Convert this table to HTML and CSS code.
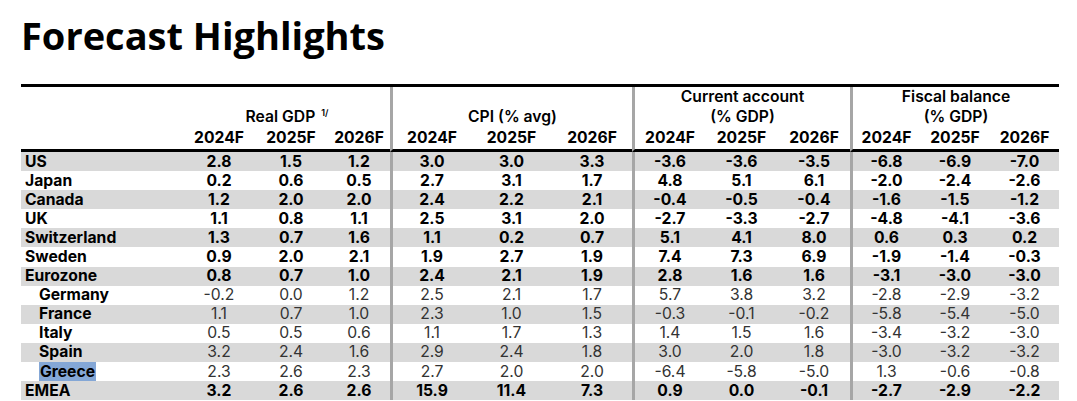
FILE: index.html
```html
<!DOCTYPE html>
<html lang="en">
<head>
<meta charset="utf-8">
<title>Forecast Highlights</title>
<link rel="stylesheet" href="styles.css">
</head>
<body>
<div class="page">
  <h1 class="title">Forecast Highlights</h1>
  <table class="fc">
    <colgroup>
      <col class="c-label">
      <col class="c-g1"><col class="c-g2"><col class="c-g3">
      <col class="c-c"><col class="c-c"><col class="c-c2">
      <col class="c-a"><col class="c-a"><col class="c-a2">
      <col class="c-f"><col class="c-f"><col class="c-f2">
    </colgroup>
    <thead>
      <tr class="h1">
        <th></th>
        <th colspan="3"></th>
        <th colspan="3" class="g"></th>
        <th colspan="3" class="g">Current account</th>
        <th colspan="3" class="g">Fiscal balance</th>
      </tr>
      <tr class="h2">
        <th></th>
        <th colspan="3">Real GDP <sup>1/</sup></th>
        <th colspan="3" class="g">CPI (% avg)</th>
        <th colspan="3" class="g">(% GDP)</th>
        <th colspan="3" class="g">(% GDP)</th>
      </tr>
      <tr class="h3">
        <th></th>
        <th>2024F</th><th>2025F</th><th>2026F</th>
        <th class="g">2024F</th><th>2025F</th><th>2026F</th>
        <th class="g">2024F</th><th>2025F</th><th>2026F</th>
        <th class="g">2024F</th><th>2025F</th><th>2026F</th>
      </tr>
    </thead>
    <tbody>
      <tr class="alt"><td class="lb">US</td><td>2.8</td><td>1.5</td><td>1.2</td><td class="g">3.0</td><td>3.0</td><td>3.3</td><td class="g">-3.6</td><td>-3.6</td><td>-3.5</td><td class="g">-6.8</td><td>-6.9</td><td>-7.0</td></tr>
      <tr><td class="lb">Japan</td><td>0.2</td><td>0.6</td><td>0.5</td><td class="g">2.7</td><td>3.1</td><td>1.7</td><td class="g">4.8</td><td>5.1</td><td>6.1</td><td class="g">-2.0</td><td>-2.4</td><td>-2.6</td></tr>
      <tr class="alt"><td class="lb">Canada</td><td>1.2</td><td>2.0</td><td>2.0</td><td class="g">2.4</td><td>2.2</td><td>2.1</td><td class="g">-0.4</td><td>-0.5</td><td>-0.4</td><td class="g">-1.6</td><td>-1.5</td><td>-1.2</td></tr>
      <tr><td class="lb">UK</td><td>1.1</td><td>0.8</td><td>1.1</td><td class="g">2.5</td><td>3.1</td><td>2.0</td><td class="g">-2.7</td><td>-3.3</td><td>-2.7</td><td class="g">-4.8</td><td>-4.1</td><td>-3.6</td></tr>
      <tr class="alt"><td class="lb">Switzerland</td><td>1.3</td><td>0.7</td><td>1.6</td><td class="g">1.1</td><td>0.2</td><td>0.7</td><td class="g">5.1</td><td>4.1</td><td>8.0</td><td class="g">0.6</td><td>0.3</td><td>0.2</td></tr>
      <tr><td class="lb">Sweden</td><td>0.9</td><td>2.0</td><td>2.1</td><td class="g">1.9</td><td>2.7</td><td>1.9</td><td class="g">7.4</td><td>7.3</td><td>6.9</td><td class="g">-1.9</td><td>-1.4</td><td>-0.3</td></tr>
      <tr class="alt"><td class="lb">Eurozone</td><td>0.8</td><td>0.7</td><td>1.0</td><td class="g">2.4</td><td>2.1</td><td>1.9</td><td class="g">2.8</td><td>1.6</td><td>1.6</td><td class="g">-3.1</td><td>-3.0</td><td>-3.0</td></tr>
      <tr class="sub"><td class="lb">Germany</td><td>-0.2</td><td>0.0</td><td>1.2</td><td class="g">2.5</td><td>2.1</td><td>1.7</td><td class="g">5.7</td><td>3.8</td><td>3.2</td><td class="g">-2.8</td><td>-2.9</td><td>-3.2</td></tr>
      <tr class="sub alt"><td class="lb">France</td><td>1.1</td><td>0.7</td><td>1.0</td><td class="g">2.3</td><td>1.0</td><td>1.5</td><td class="g">-0.3</td><td>-0.1</td><td>-0.2</td><td class="g">-5.8</td><td>-5.4</td><td>-5.0</td></tr>
      <tr class="sub"><td class="lb">Italy</td><td>0.5</td><td>0.5</td><td>0.6</td><td class="g">1.1</td><td>1.7</td><td>1.3</td><td class="g">1.4</td><td>1.5</td><td>1.6</td><td class="g">-3.4</td><td>-3.2</td><td>-3.0</td></tr>
      <tr class="sub alt"><td class="lb">Spain</td><td>3.2</td><td>2.4</td><td>1.6</td><td class="g">2.9</td><td>2.4</td><td>1.8</td><td class="g">3.0</td><td>2.0</td><td>1.8</td><td class="g">-3.0</td><td>-3.2</td><td>-3.2</td></tr>
      <tr class="sub"><td class="lb"><span class="sel">Greece</span></td><td>2.3</td><td>2.6</td><td>2.3</td><td class="g">2.7</td><td>2.0</td><td>2.0</td><td class="g">-6.4</td><td>-5.8</td><td>-5.0</td><td class="g">1.3</td><td>-0.6</td><td>-0.8</td></tr>
      <tr class="alt"><td class="lb">EMEA</td><td>3.2</td><td>2.6</td><td>2.6</td><td class="g">15.9</td><td>11.4</td><td>7.3</td><td class="g">0.9</td><td>0.0</td><td>-0.1</td><td class="g">-2.7</td><td>-2.9</td><td>-2.2</td></tr>
    </tbody>
  </table>
</div>
</body>
</html>
```

FILE: styles.css
```css
html, body {
  margin: 0;
  padding: 0;
  background: #ffffff;
}

body {
  font-family: "Open Sans", "Noto Sans", "Liberation Sans", sans-serif;
  color: #000;
}

.page {
  padding: 13px 0 0 21px;
}

.title {
  margin: 0 0 27px 0;
  font-size: 38px;
  line-height: 44px;
  font-weight: 700;
  letter-spacing: 0;
}

.fc {
  width: 1038px;
  table-layout: fixed;
  border-collapse: separate;
  border-spacing: 0;
  border-top: 3px solid #000;
  font-family: Inter, "Open Sans", "Liberation Sans", sans-serif;
  font-size: 15.7px;
}

.c-label { width: 163px; }
.c-g1 { width: 70px; }
.c-g2 { width: 74px; }
.c-g3 { width: 62px; }
.c-c { width: 81px; }
.c-c2 { width: 80px; }
.c-a { width: 73px; }
.c-a2 { width: 72px; }
.c-f { width: 70px; }
.c-f2 { width: 69px; }

.fc th,
.fc td {
  padding: 0;
  text-align: center;
  white-space: nowrap;
  overflow: visible;
}

.fc thead th {
  font-weight: 600;
  vertical-align: middle;
}

.fc .h1 th { height: 20px; line-height: 20px; }
.fc .h2 th { height: 20px; line-height: 20px; }
.fc .h3 th {
  height: 22px;
  line-height: 20px;
  font-weight: 700;
  border-bottom: 3px solid #000;
}

.fc sup {
  font-size: 9px;
  line-height: 0;
  vertical-align: 6px;
  margin-left: 2px;
}

.fc .g {
  border-left: 3px solid #a6a6a6;
}

.fc tbody td {
  height: 19.1px;
  line-height: 18px;
  font-weight: 700;
  vertical-align: middle;
}

.fc tbody tr.alt td {
  background: #d9d9d9;
}

.fc td.lb {
  text-align: left;
  padding-left: 4px;
}

.fc tr.sub td {
  font-weight: 400;
  color: #333333;
}

.fc tr.sub td.lb {
  font-weight: 700;
  color: #000;
  padding-left: 18px;
}

.sel {
  background: #84a7d6;
  padding: 0 1px;
}
```
